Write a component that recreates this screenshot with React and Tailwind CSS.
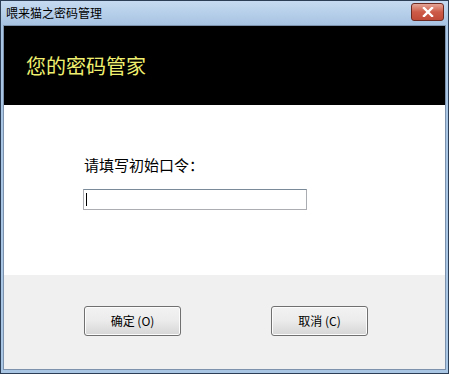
import React from 'react';

const font = { fontFamily: '"Noto Sans CJK SC", "Liberation Sans", sans-serif' };

const Button = ({ label }) => (
  <button className="w-[97px] h-[30px] rounded-[3px] border border-[#707070] bg-gradient-to-b from-[#f2f2f2] via-[#ebebeb] to-[#d6d6d6] text-[12px] text-black shadow-[inset_0_0_0_1px_#fcfcfc]">
    {label}
  </button>
);

const App = () => {
  return (
    <div style={font} className="w-[449px] h-[374px] flex flex-col bg-[#a9c6e4] border border-[#2b3e55] overflow-hidden">
      {/* Title bar */}
      <div className="h-[24px] flex items-center justify-between pl-[5px] pr-[4px] bg-gradient-to-b from-[#c6dbf1] to-[#a7c3e2]">
        <span className="text-[12px] text-black leading-none">喂来猫之密码管理</span>
        <div className="w-[33px] h-[18px] -mt-[2px] rounded-[3px] border border-[#6d2a23] bg-gradient-to-b from-[#e3a597] via-[#cd5a48] to-[#c04a38] flex items-center justify-center">
          <svg width="12" height="10" viewBox="0 0 12 10">
            <path d="M2 1 L10 9 M10 1 L2 9" stroke="#fff" strokeWidth="2.4" strokeLinecap="square" />
          </svg>
        </div>
      </div>

      {/* Client area */}
      <div className="flex-1 flex flex-col mx-[2px] mb-[3px] border border-[#7d93ad] bg-[#f0f0f0]">
        <div className="h-[79px] bg-black flex items-center pl-[22px]">
          <span className="text-[20px] text-[#f0f070] leading-none">您的密码管家</span>
        </div>

        <div className="h-[170px] bg-white flex flex-col pl-[80px] pt-[52px]">
          <span className="text-[15px] text-black leading-none">请填写初始口令：</span>
          <div className="mt-[17px] -ml-px w-[224px] h-[21px] border border-[#abadb3] border-t-[#7a8a99] bg-white flex items-center pl-[2px]">
            <div className="w-px h-[13px] bg-black" />
          </div>
        </div>

        <div className="flex-1 flex items-start pt-[31px] pl-[80px] gap-[90px]">
          <Button label="确定 (O)" />
          <Button label="取消 (C)" />
        </div>
      </div>
    </div>
  );
};

export default App;
